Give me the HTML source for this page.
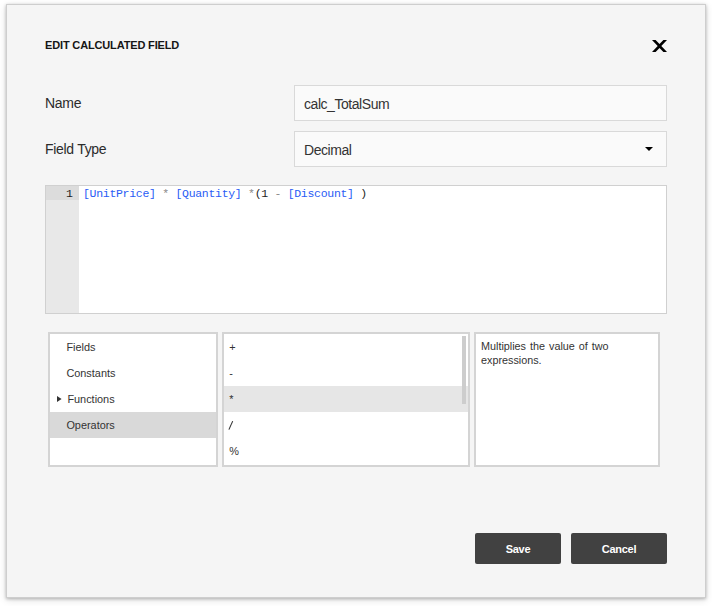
<!DOCTYPE html>
<html><head><meta charset="utf-8">
<style>
html,body{margin:0;padding:0;background:#fff;width:712px;height:606px;overflow:hidden;}
body{font-family:"Liberation Sans",sans-serif;color:#333;position:relative;}
.a{position:absolute;white-space:nowrap;}
.dlg{position:absolute;left:6px;top:4px;width:698px;height:592px;background:#f5f5f5;border:1px solid #cecece;box-shadow:0 1px 3px rgba(0,0,0,.25), 0 2px 8px rgba(0,0,0,.12);}
.title{left:45px;top:39px;font-size:11px;line-height:12px;font-weight:bold;color:#161616;letter-spacing:-0.15px;}
.lbl{font-size:14px;line-height:16px;color:#2b2b2b;letter-spacing:-0.3px;}
.inp{position:absolute;left:294px;width:371px;height:34px;background:#fafafa;border:1px solid #d9d9d9;}
.inp span{position:absolute;left:9px;top:10px;font-size:14px;letter-spacing:-0.45px;line-height:16px;color:#333;white-space:nowrap;}
.ed{position:absolute;left:45px;top:185px;width:620px;height:127px;background:#fff;border:1px solid #d0d0d0;}
.gut{position:absolute;left:0;top:0;width:33px;height:127px;background:#e8e8e8;}
.gutact{position:absolute;left:0;top:0;width:33px;height:14px;background:#dcdcdc;}
.mono{font-family:"Liberation Mono",monospace;font-size:11.5px;line-height:15px;letter-spacing:-0.3px;}
.box{position:absolute;top:332px;height:131px;background:#fff;border:2px solid #d4d4d4;overflow:hidden;}
.row{position:absolute;left:0;right:0;height:26px;}
.row span{position:absolute;top:6px;font-size:10.9px;line-height:14px;color:#333;white-space:nowrap;}
.btn{position:absolute;top:533px;height:31px;background:#414141;border-radius:2px;color:#fff;font-weight:bold;font-size:11px;letter-spacing:-0.3px;text-align:center;line-height:33px;}
</style></head><body>
<div class="dlg"></div>
<div class="a title">EDIT CALCULATED FIELD</div>
<svg class="a" style="left:652px;top:40px" width="15" height="12" viewBox="0 0 15 12"><polygon points="0,0 3.6,0 7.5,4.1 11.4,0 15,0 9.3,6 15,12 11.4,12 7.5,7.9 3.6,12 0,12 5.7,6" fill="#000"/></svg>

<div class="a lbl" style="left:45px;top:95px">Name</div>
<div class="a lbl" style="left:45px;top:141px">Field Type</div>
<div class="inp" style="top:85px"><span>calc_TotalSum</span></div>
<div class="inp" style="top:131px"><span>Decimal</span></div>
<svg class="a" style="left:645px;top:147px" width="8" height="4" viewBox="0 0 8 4"><polygon points="0,0 8,0 4,4" fill="#000"/></svg>

<div class="ed">
  <div class="gut"></div>
  <div class="gutact"></div>
  <div class="a mono" style="left:20px;top:0px;color:#1e1e1e">1</div>
  <div class="a mono" style="left:37px;top:0px"><span style="color:#2a5cf5">[UnitPrice]</span><span style="color:#888"> * </span><span style="color:#2a5cf5">[Quantity]</span><span style="color:#888"> *</span><span style="color:#222">(1</span><span style="color:#888"> - </span><span style="color:#2a5cf5">[Discount]</span><span style="color:#222"> )</span></div>
</div>

<div class="box" style="left:48px;width:166px;">
  <div class="row" style="top:0"><span style="left:16.4px">Fields</span></div>
  <div class="row" style="top:26px"><span style="left:16.4px">Constants</span></div>
  <div class="row" style="top:52px"><svg class="a" style="left:7px;top:10px" width="5" height="6" viewBox="0 0 5 6"><polygon points="0,0 4.6,3 0,6" fill="#333"/></svg><span style="left:17.4px">Functions</span></div>
  <div class="row" style="top:78px;background:#d9d9d9"><span style="left:16.4px">Operators</span></div>
</div>
<div class="box" style="left:222px;width:244px;">
  <div class="row" style="top:0"><span style="left:5.2px">+</span></div>
  <div class="row" style="top:26px"><span style="left:5.2px">-</span></div>
  <div class="row" style="top:52px;background:#e6e6e6"><span style="left:5.2px">*</span></div>
  <div class="row" style="top:78px"><svg class="a" style="left:4px;top:8px" width="8" height="12" viewBox="0 0 8 12"><line x1="0.9" y1="9.6" x2="4.7" y2="1.1" stroke="#333" stroke-width="1.1"/></svg></div>
  <div class="row" style="top:104px"><span style="left:5.2px">%</span></div>
  <div class="a" style="left:238px;top:2px;width:4px;height:68px;background:#cdcdcd"></div>
</div>
<div class="box" style="left:474px;width:182px;">
  <div class="a" style="left:5px;top:5px;font-size:10.8px;line-height:14px;color:#333;white-space:normal;width:176px;word-spacing:1px">Multiplies the value of two expressions.</div>
</div>

<div class="btn" style="left:475px;width:86px">Save</div>
<div class="btn" style="left:571px;width:96px">Cancel</div>
</body></html>
